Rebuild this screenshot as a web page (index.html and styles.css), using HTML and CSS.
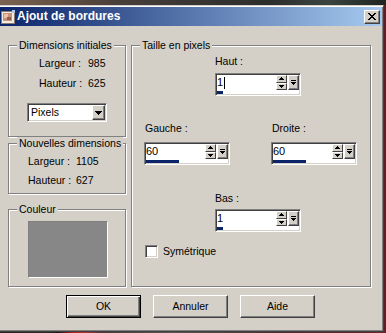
FILE: index.html
```html
<!DOCTYPE html>
<html lang="fr">
<head>
<meta charset="utf-8">
<title>Ajout de bordures</title>
<link rel="stylesheet" href="styles.css">
</head>
<body>
<div class="window">
  <div class="titlebar">
    <svg class="app-icon" width="14" height="14" viewBox="0 0 14 14" shape-rendering="crispEdges">
      <rect x="0" y="1" width="13" height="12" fill="#f0ece4" stroke="#8a7a70" stroke-width="1"/>
      <rect x="2" y="3" width="9" height="8" fill="#c89078"/>
      <rect x="3" y="4" width="4" height="4" fill="#e8c0a8"/>
      <rect x="6" y="7" width="4" height="3" fill="#906050"/>
      <rect x="11" y="0" width="3" height="3" fill="#b0c8e8"/>
    </svg>
    <span class="title">Ajout de bordures</span>
    <span class="close-btn">
      <svg width="8" height="7" viewBox="0 0 8 7" shape-rendering="crispEdges">
        <path d="M0 0h2v1h-2z M6 0h2v1h-2z M1 1h2v1h-2z M5 1h2v1h-2z M2 2h4v1h-4z M3 3h2v1h-2z M2 4h4v1h-4z M1 5h2v1h-2z M5 5h2v1h-2z M0 6h2v1h-2z M6 6h2v1h-2z" fill="#000"/>
      </svg>
    </span>
  </div>

  <div class="client">
    <div class="main">
      <div class="left-col">
        <fieldset class="group">
          <legend>Dimensions initiales</legend>
          <div class="box-init">
            <div class="dims dims-init">
              <span>Largeur :</span><span>985</span>
              <span>Hauteur :</span><span>625</span>
            </div>
            <div class="combo">
              <span class="combo-text">Pixels</span>
              <span class="combo-btn">
                <svg width="7" height="4" viewBox="0 0 7 4" shape-rendering="crispEdges"><path d="M0 0h7v1h-7z M1 1h5v1h-5z M2 2h3v1h-3z M3 3h1v1h-1z" fill="#000"/></svg>
              </span>
            </div>
          </div>
        </fieldset>

        <fieldset class="group">
          <legend>Nouvelles dimensions</legend>
          <div class="box-new">
            <div class="dims dims-new">
              <span>Largeur :</span><span>1105</span>
              <span>Hauteur :</span><span>627</span>
            </div>
          </div>
        </fieldset>

        <fieldset class="group group-color">
          <legend>Couleur</legend>
          <div class="box-color">
            <div class="swatch"></div>
          </div>
        </fieldset>
      </div>

      <fieldset class="group group-size">
        <legend>Taille en pixels</legend>
        <div class="size-content">
          <div class="field field-top">
            <div class="field-label">Haut :</div>
            <div class="spin">
              <div class="spin-top">
                <span class="spin-text">1<span class="caret"></span></span>
                <span class="spin-btns">
                  <span class="sb"><svg width="5" height="3" viewBox="0 0 5 3" shape-rendering="crispEdges"><path d="M2 0h1v1h-1z M1 1h3v1h-3z M0 2h5v1h-5z" fill="#000"/></svg></span>
                  <span class="sb"><svg width="5" height="3" viewBox="0 0 5 3" shape-rendering="crispEdges"><path d="M0 0h5v1h-5z M1 1h3v1h-3z M2 2h1v1h-1z" fill="#000"/></svg></span>
                </span>
                <span class="pop"><svg width="5" height="6" viewBox="0 0 5 6" shape-rendering="crispEdges"><path d="M0 0h5v1h-5z M0 2h5v1h-5z M1 3h3v1h-3z M2 4h1v1h-1z" fill="#000"/></svg></span>
              </div>
              <div class="spin-track"><span class="spin-bar" style="width:6px"></span></div>
            </div>
          </div>

          <div class="side-row">
            <div class="field">
              <div class="field-label">Gauche :</div>
              <div class="spin">
                <div class="spin-top">
                  <span class="spin-text">60</span>
                  <span class="spin-btns">
                    <span class="sb"><svg width="5" height="3" viewBox="0 0 5 3" shape-rendering="crispEdges"><path d="M2 0h1v1h-1z M1 1h3v1h-3z M0 2h5v1h-5z" fill="#000"/></svg></span>
                    <span class="sb"><svg width="5" height="3" viewBox="0 0 5 3" shape-rendering="crispEdges"><path d="M0 0h5v1h-5z M1 1h3v1h-3z M2 2h1v1h-1z" fill="#000"/></svg></span>
                  </span>
                  <span class="pop"><svg width="5" height="6" viewBox="0 0 5 6" shape-rendering="crispEdges"><path d="M0 0h5v1h-5z M0 2h5v1h-5z M1 3h3v1h-3z M2 4h1v1h-1z" fill="#000"/></svg></span>
                </div>
                <div class="spin-track"><span class="spin-bar" style="width:33px"></span></div>
              </div>
            </div>
            <div class="field field-right">
              <div class="field-label">Droite :</div>
              <div class="spin">
                <div class="spin-top">
                  <span class="spin-text">60</span>
                  <span class="spin-btns">
                    <span class="sb"><svg width="5" height="3" viewBox="0 0 5 3" shape-rendering="crispEdges"><path d="M2 0h1v1h-1z M1 1h3v1h-3z M0 2h5v1h-5z" fill="#000"/></svg></span>
                    <span class="sb"><svg width="5" height="3" viewBox="0 0 5 3" shape-rendering="crispEdges"><path d="M0 0h5v1h-5z M1 1h3v1h-3z M2 2h1v1h-1z" fill="#000"/></svg></span>
                  </span>
                  <span class="pop"><svg width="5" height="6" viewBox="0 0 5 6" shape-rendering="crispEdges"><path d="M0 0h5v1h-5z M0 2h5v1h-5z M1 3h3v1h-3z M2 4h1v1h-1z" fill="#000"/></svg></span>
                </div>
                <div class="spin-track"><span class="spin-bar" style="width:33px"></span></div>
              </div>
            </div>
          </div>

          <div class="field field-bottom">
            <div class="field-label">Bas :</div>
            <div class="spin">
              <div class="spin-top">
                <span class="spin-text">1</span>
                <span class="spin-btns">
                  <span class="sb"><svg width="5" height="3" viewBox="0 0 5 3" shape-rendering="crispEdges"><path d="M2 0h1v1h-1z M1 1h3v1h-3z M0 2h5v1h-5z" fill="#000"/></svg></span>
                  <span class="sb"><svg width="5" height="3" viewBox="0 0 5 3" shape-rendering="crispEdges"><path d="M0 0h5v1h-5z M1 1h3v1h-3z M2 2h1v1h-1z" fill="#000"/></svg></span>
                </span>
                <span class="pop"><svg width="5" height="6" viewBox="0 0 5 6" shape-rendering="crispEdges"><path d="M0 0h5v1h-5z M0 2h5v1h-5z M1 3h3v1h-3z M2 4h1v1h-1z" fill="#000"/></svg></span>
              </div>
              <div class="spin-track"><span class="spin-bar" style="width:6px"></span></div>
            </div>
          </div>

          <label class="check-row">
            <span class="checkbox"></span>
            <span>Symétrique</span>
          </label>
        </div>
      </fieldset>
    </div>

    <div class="buttons">
      <span class="btn btn-default">OK</span>
      <span class="btn">Annuler</span>
      <span class="btn">Aide</span>
    </div>
  </div>
</div>
</body>
</html>
```

FILE: styles.css
```css
html {
  background:
    linear-gradient(to right, #7a6352 0%, #6a5446 12%, #4a403a 30%, #3a3634 50%, #2c2e2c 70%, #3c4440 85%, #1e2420 100%) top left / 100% 5px no-repeat,
    linear-gradient(to right, #2a2222 0%, #302828 12%, #1c1818 15%, #b82020 19%, #c03030 22%, #4a3a38 26%, #5a5450 45%, #4a3030 70%, #6a2428 100%) bottom left / 100% 3px no-repeat,
    #5c1e22;
  height: 333px;
}

body {
  margin: 0;
  font-family: "Liberation Sans", Arial, sans-serif;
  font-size: 10.5px;
  color: #000;
}

.window {
  margin-top: 5px;
  width: 384px;
  height: 327px;
  box-sizing: border-box;
  background: #d4d0c8;
  border-top: 1px solid #d4d0c8;
  border-right: 1px solid #404040;
  border-bottom: 1px solid #404040;
  box-shadow: inset 0 1px 0 #fff, inset -1px -1px 0 #808080;
  padding: 1px 1px 0 0;
}

/* Title bar */
.titlebar {
  height: 19px;
  display: flex;
  align-items: center;
  background: linear-gradient(to right, #0a246a, #a6caf0);
  color: #fff;
}

.app-icon {
  margin-left: 1px;
  flex: none;
}

.title {
  margin-left: 2px;
  font-weight: bold;
  font-size: 12px;
  line-height: 19px;
  white-space: nowrap;
}

.close-btn {
  margin-left: auto;
  margin-right: 2px;
  width: 16px;
  height: 14px;
  box-sizing: border-box;
  background: #d4d0c8;
  border: 1px solid;
  border-color: #fff #404040 #404040 #fff;
  box-shadow: inset -1px -1px 0 #808080;
  display: flex;
  align-items: center;
  justify-content: center;
}

/* Client area */
.client {
  padding: 13px 0 0 8px;
}

.main {
  display: flex;
  align-items: stretch;
}

.left-col {
  width: 118px;
  display: flex;
  flex-direction: column;
}

.group {
  margin: 0;
  padding: 0;
  min-width: 0;
  border: 1px solid #808080;
  box-shadow: 1px 1px 0 #fff, inset 1px 1px 0 #fff;
}

.group legend {
  margin-left: 8px;
  padding: 0 2px;
  line-height: 13px;
  background: #d4d0c8;
}

.box-init {
  padding: 5px 0 14px 0;
}

.dims {
  display: grid;
  row-gap: 7px;
  line-height: 13px;
}

.dims-init {
  grid-template-columns: 49px auto;
  padding-left: 30px;
}

.dims-new {
  grid-template-columns: 48px auto;
  padding-left: 19px;
  row-gap: 6px;
}

.box-new {
  padding: 5px 0 6px 0;
}

.combo {
  margin: 13px 0 0 18px;
  width: 80px;
  height: 19px;
  box-sizing: border-box;
  background: #fff;
  border: 1px solid;
  border-color: #808080 #fff #fff #808080;
  box-shadow: inset 1px 1px 0 #404040, inset -1px -1px 0 #d4d0c8;
  padding: 1px;
  display: flex;
}

.combo-text {
  flex: 1;
  padding-left: 2px;
  line-height: 15px;
}

.combo-btn {
  width: 13px;
  box-sizing: border-box;
  background: #d4d0c8;
  border: 1px solid;
  border-color: #fff #404040 #404040 #fff;
  box-shadow: inset -1px -1px 0 #808080;
  display: flex;
  align-items: center;
  justify-content: center;
}

.group-color {
  margin-top: 9px;
}

.box-color {
  padding: 5px 0 8px 19px;
}

.swatch {
  width: 80px;
  height: 57px;
  box-sizing: border-box;
  background: #878787;
  border: 1px solid;
  border-color: #808080 #fff #fff #808080;
}

/* Right group */
.group-size {
  margin-left: 5px;
  width: 240px;
  box-sizing: border-box;
}

.size-content {
  display: flex;
  flex-direction: column;
  align-items: flex-start;
  padding-left: 12px;
}

.field-label {
  line-height: 13px;
  padding-left: 1px;
}

.field-top {
  margin: 3px 0 0 70px;
}

.field-top .spin,
.field-bottom .spin {
  margin-left: 1px;
}

.field-top .spin {
  margin-top: 5px;
}

.side-row {
  display: flex;
  margin-top: 26px;
}

.side-row .spin {
  margin-top: 7px;
}

.field-right {
  margin-left: 41px;
}

.field-bottom {
  margin: 27px 0 0 70px;
}

.field-bottom .spin {
  margin-top: 4px;
}

.spin {
  width: 86px;
  height: 23px;
  box-sizing: border-box;
  background: #fff;
  border: 1px solid;
  border-color: #808080 #fff #fff #808080;
  box-shadow: inset 1px 1px 0 #404040, inset -1px -1px 0 #d4d0c8;
  padding: 1px;
  display: flex;
  flex-direction: column;
}

.spin-top {
  display: flex;
  height: 15px;
}

.spin-text {
  flex: 1;
  line-height: 15px;
  font-size: 11px;
  display: flex;
  align-items: center;
}

.caret {
  display: inline-block;
  width: 1px;
  height: 12px;
  margin-left: 1px;
  background: #000;
}

.spin-btns {
  width: 11px;
  display: flex;
  flex-direction: column;
}

.sb {
  flex: 1;
  box-sizing: border-box;
  background: #d4d0c8;
  border: 1px solid;
  border-color: #fff #404040 #404040 #fff;
  display: flex;
  align-items: center;
  justify-content: center;
}

.pop {
  width: 11px;
  margin-left: 1px;
  box-sizing: border-box;
  background: #d4d0c8;
  border: 1px solid;
  border-color: #fff #404040 #404040 #fff;
  box-shadow: inset -1px -1px 0 #808080;
  display: flex;
  align-items: center;
  justify-content: center;
}

.spin-track {
  flex: 1;
  padding-top: 1px;
}

.spin-bar {
  display: block;
  height: 3px;
  background: #0a246a;
}

.check-row {
  margin: 13px 0 0 1px;
  display: flex;
  align-items: center;
  line-height: 13px;
}

.checkbox {
  width: 13px;
  height: 13px;
  box-sizing: border-box;
  background: #fff;
  border: 1px solid;
  border-color: #808080 #fff #fff #808080;
  box-shadow: inset 1px 1px 0 #404040, inset -1px -1px 0 #d4d0c8;
  margin-right: 5px;
}

/* Buttons */
.buttons {
  display: flex;
  gap: 12px;
  margin: 8px 0 0 58px;
}

.btn {
  width: 75px;
  height: 23px;
  box-sizing: border-box;
  background: #d4d0c8;
  border: 1px solid;
  border-color: #fff #404040 #404040 #fff;
  box-shadow: inset -1px -1px 0 #808080;
  text-align: center;
  line-height: 21px;
}

.btn-default {
  border-color: #000;
  box-shadow: inset 1px 1px 0 #fff, inset -1px -1px 0 #404040, inset -2px -2px 0 #808080;
}
```
